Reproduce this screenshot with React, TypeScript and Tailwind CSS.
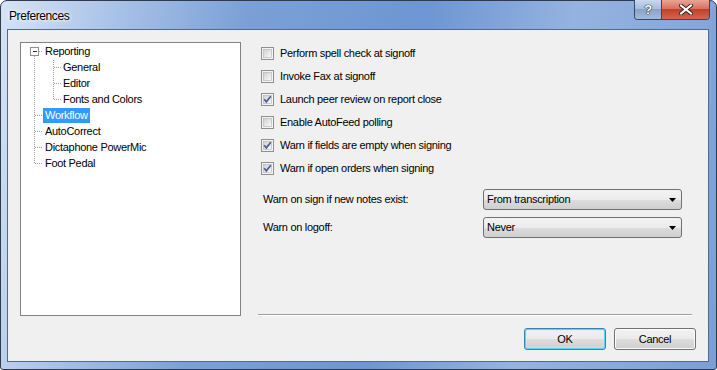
import React from 'react';

interface optionRow {
  label: string;
  checked: boolean;
}

const options: optionRow[] = [
  { label: 'Perform spell check at signoff', checked: false },
  { label: 'Invoke Fax at signoff', checked: false },
  { label: 'Launch peer review on report close', checked: true },
  { label: 'Enable AutoFeed polling', checked: false },
  { label: 'Warn if fields are empty when signing', checked: true },
  { label: 'Warn if open orders when signing', checked: true },
];

const treeRows = [
  { label: 'Reporting', indent: 24 },
  { label: 'General', indent: 42 },
  { label: 'Editor', indent: 42 },
  { label: 'Fonts and Colors', indent: 42 },
  { label: 'Workflow', indent: 24, selected: true },
  { label: 'AutoCorrect', indent: 24 },
  { label: 'Dictaphone PowerMic', indent: 24 },
  { label: 'Foot Pedal', indent: 24 },
];

const CheckBox = ({ checked }: { checked: boolean }) => (
  <svg width="13" height="13" viewBox="0 0 13 13" className="shrink-0">
    <defs>
      <linearGradient id="cbfill" x1="0" y1="0" x2="1" y2="1">
        <stop offset="0" stopColor="#cfcfcf" />
        <stop offset="1" stopColor="#fbfbfb" />
      </linearGradient>
    </defs>
    <rect x="0.5" y="0.5" width="12" height="12" fill="#f4f4f4" stroke="#8e8f8f" />
    <rect x="2.5" y="2.5" width="8" height="8" fill="url(#cbfill)" stroke="#b0b0b0" strokeWidth="0.6" />
    {checked && (
      <path d="M3.2 6.3 L5.3 8.8 L9.8 3.2" fill="none" stroke="#4a5e96" strokeWidth="1.7" />
    )}
  </svg>
);

const Select = ({ value }: { value: string }) => (
  <div className="flex h-[21px] w-[199px] items-center justify-between rounded-[3px] border border-[#707070] bg-[linear-gradient(180deg,#f3f3f3_0%,#ebebeb_50%,#dddddd_51%,#cfcfcf_100%)] pl-[3px] pr-[5px]">
    <span>{value}</span>
    <svg width="7" height="4" viewBox="0 0 7 4">
      <path d="M0 0 H7 L3.5 4 Z" fill="#000" />
    </svg>
  </div>
);

const TreeLines = () => (
  <svg width="60" height="130" className="absolute left-0 top-0" shapeRendering="crispEdges">
    <g stroke="#a0a0a0" strokeDasharray="1 1" strokeWidth="1">
      <line x1="13.5" y1="13" x2="13.5" y2="121" />
      <line x1="18" y1="8.5" x2="22" y2="8.5" />
      <line x1="14" y1="72.5" x2="22" y2="72.5" />
      <line x1="14" y1="88.5" x2="22" y2="88.5" />
      <line x1="14" y1="104.5" x2="22" y2="104.5" />
      <line x1="14" y1="120.5" x2="22" y2="120.5" />
      <line x1="32.5" y1="17" x2="32.5" y2="57" />
      <line x1="33" y1="24.5" x2="40" y2="24.5" />
      <line x1="33" y1="40.5" x2="40" y2="40.5" />
      <line x1="33" y1="56.5" x2="40" y2="56.5" />
    </g>
    <rect x="9.5" y="4.5" width="8" height="8" fill="#fff" stroke="#919191" />
    <line x1="11.5" y1="8.5" x2="16" y2="8.5" stroke="#333" />
  </svg>
);

const App = () => {
  return (
    <div className="h-[370px] w-[717px] overflow-hidden bg-white font-['Liberation_Sans',Arial,sans-serif] text-[11px] tracking-[-0.3px] text-black">
      <div className="flex h-full flex-col rounded-b-[3px] rounded-t-[7px] border border-[#2f3b4c] bg-[linear-gradient(100deg,#d6e3f5_0%,#abc4e8_14%,#7aa0d6_32%,#6d96d2_55%,#95b3e0_74%,#7a9fd6_100%)]">
        {/* title bar */}
        <div className="flex h-[28px] shrink-0 items-start justify-between">
          <span className="ml-[8px] mt-[6px] text-[12px] tracking-[-0.4px] [text-shadow:0_0_6px_#ffffff,0_0_3px_#ffffff]">
            Preferences
          </span>
          <div className="-mt-px mr-[6px] flex h-[20px] overflow-hidden rounded-b-[4px] border border-t-0 border-[#3b4658]">
            <div className="flex w-[27px] items-center justify-center border-r border-[#3b4658] bg-[linear-gradient(180deg,#c9d8ee_0%,#a9bedc_45%,#8aa3c8_50%,#a3bbdd_100%)] text-[13px] font-bold text-white [text-shadow:0_0_1px_#222,0_0_1px_#222,0_0_1px_#222]">
              ?
            </div>
            <div className="flex w-[47px] items-center justify-center bg-[linear-gradient(180deg,#e9a596_0%,#d7725f_45%,#c2412b_50%,#d3664f_100%)]">
              <svg width="14" height="11" viewBox="0 0 14 11">
                <path d="M2 1.5 L12 9.5 M12 1.5 L2 9.5" stroke="#3a2222" strokeWidth="4" strokeLinecap="square" />
                <path d="M2 1.5 L12 9.5 M12 1.5 L2 9.5" stroke="#ffffff" strokeWidth="2" strokeLinecap="square" />
              </svg>
            </div>
          </div>
        </div>

        {/* client area */}
        <div className="mb-[7px] ml-[6px] mr-[7px] flex flex-1 flex-col border border-[#51698f] bg-[#f0f0f0]">
          <div className="flex flex-1">
            <div className="relative ml-[12px] mt-[12px] h-[274px] w-[221px] shrink-0 border border-[#828282] bg-white">
              <TreeLines />
              <div className="relative flex flex-col">
                {treeRows.map((row, index) => (
                  <div key={index} className="flex h-[16px] items-center" style={{ paddingLeft: row.indent - 2 }}>
                    <span
                      className={
                        row.selected
                          ? 'flex h-[15px] items-center bg-[#3399ff] px-[2px] text-white'
                          : 'flex h-[15px] items-center px-[2px]'
                      }
                    >
                      {row.label}
                    </span>
                  </div>
                ))}
              </div>
            </div>

            <div className="flex flex-1 flex-col pt-[12px]">
              <div className="flex flex-col pl-[20px]">
                {options.map((item, index) => (
                  <div key={index} className="flex h-[23px] items-center gap-[6px]">
                    <CheckBox checked={item.checked} />
                    <span>{item.label}</span>
                  </div>
                ))}
              </div>

              <div className="mt-[9px] flex flex-col gap-[7px] pl-[22px]">
                <div className="flex items-center">
                  <span className="w-[220px]">Warn on sign if new notes exist:</span>
                  <Select value="From transcription" />
                </div>
                <div className="flex items-center">
                  <span className="w-[220px]">Warn on logoff:</span>
                  <Select value="Never" />
                </div>
              </div>

              <div className="flex-1" />
              <div className="mb-[1px] ml-[17px] mr-[16px] border-b border-t border-b-white border-t-[#a0a0a0]" />
            </div>
          </div>

          <div className="flex justify-end gap-[8px] pb-[11px] pr-[12px] pt-[11px]">
            <button className="h-[22px] w-[82px] rounded-[3px] border border-[#3c7fb1] bg-[linear-gradient(180deg,#f2f2f2_0%,#ebebeb_50%,#dddddd_51%,#cfcfcf_100%)] shadow-[inset_0_0_0_1px_#5fd3f8,inset_0_0_2px_1px_#bfeafc]">
              OK
            </button>
            <button className="h-[22px] w-[82px] rounded-[3px] border border-[#707070] bg-[linear-gradient(180deg,#f2f2f2_0%,#ebebeb_50%,#dddddd_51%,#cfcfcf_100%)] shadow-[inset_0_0_0_1px_#fbfbfb]">
              Cancel
            </button>
          </div>
        </div>
      </div>
    </div>
  );
};

export default App;
